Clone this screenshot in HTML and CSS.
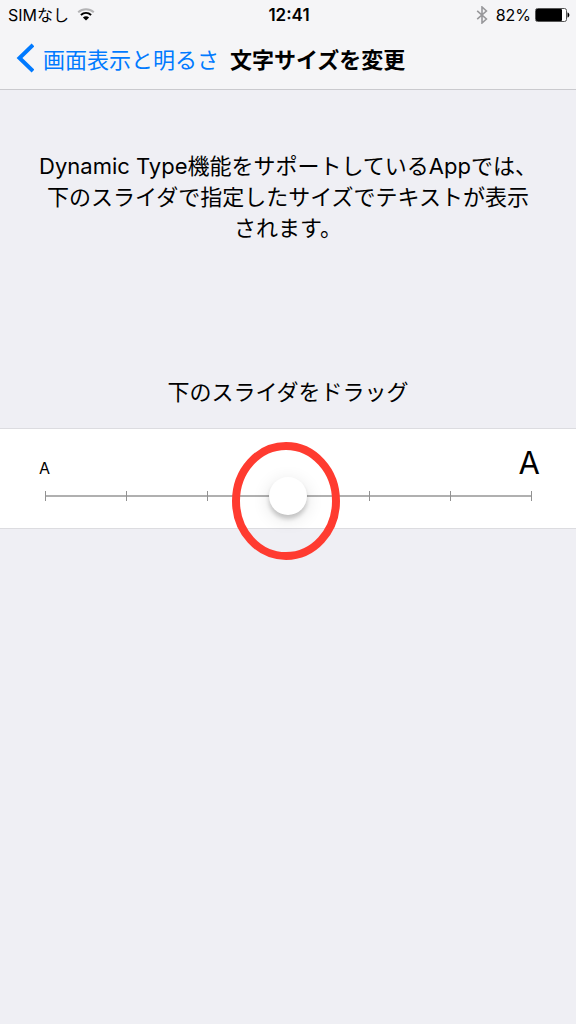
FILE: index.html
```html
<!DOCTYPE html>
<html lang="ja">
<head>
<meta charset="utf-8">
<meta name="viewport" content="width=device-width, initial-scale=1">
<title>文字サイズを変更</title>
<link rel="stylesheet" href="styles.css">
</head>
<body>
<header class="top">
  <div class="status">
    <div class="status-left">
      <span>SIMなし</span>
      <svg class="wifi" viewBox="0 0 18 13" width="18" height="13" aria-hidden="true">
        <path d="M1.2 4.2C5.7 .1 12.3 .1 16.8 4.2" fill="none" stroke="#b4b4b6" stroke-width="2"/>
        <path d="M3.9 7C6.9 4.4 11.1 4.4 14.1 7" fill="none" stroke="#000" stroke-width="2"/>
        <path d="M9 12.4L5.9 9.4C7.7 7.9 10.3 7.9 12.1 9.4Z" fill="#000"/>
      </svg>
    </div>
    <time class="clock">12:41</time>
    <div class="status-right">
      <svg class="bluetooth" viewBox="0 0 12 18" width="12" height="18" aria-hidden="true">
        <path d="M1.2 4.8L10.4 13L6 17V1L10.4 5L1.2 13.2" fill="none" stroke="#98989b" stroke-width="1.6"/>
      </svg>
      <span>82%</span>
      <svg class="battery" viewBox="0 0 35 14" width="35" height="14" aria-hidden="true">
        <rect x=".5" y=".5" width="31" height="13" rx="2" fill="#fff" stroke="#555"/>
        <rect x="1" y="1" width="26" height="12" rx="1" fill="#000"/>
        <path d="M32.500 4.500C35 5 35 9 32.500 9.500Z" fill="#000"/>
      </svg>
    </div>
  </div>
  <nav class="nav">
    <a class="back" href="#">
      <svg viewBox="0 0 18 30" width="18" height="30" aria-hidden="true">
        <path d="M17 2L3.500 15L17 28" fill="none" stroke="#007aff" stroke-width="4"/>
      </svg>
      <span>画面表示と明るさ</span>
    </a>
    <h1 class="title">文字サイズを変更</h1>
  </nav>
</header>
<main>
  <p class="description">Dynamic Type機能をサポートしているAppでは、<br>下のスライダで指定したサイズでテキストが表示<br>されます。</p>
  <label class="hint" for="size">下のスライダをドラッグ</label>
  <section class="panel">
    <div class="letters" aria-hidden="true"><span class="small">A</span><span class="large">A</span></div>
    <div class="slider">
      <div class="ticks"><i></i><i></i><i></i><i></i><i></i><i></i><i></i></div>
      <input class="range" id="size" type="range" min="0" max="6" value="3">
      <svg class="ring" viewBox="0 0 108 120" width="108" height="120" aria-hidden="true">
        <ellipse cx="54" cy="60" rx="50" ry="55" fill="none" stroke="#ff3b30" stroke-width="8"/>
      </svg>
    </div>
  </section>
</main>
</body>
</html>
```

FILE: styles.css
```css
* {
  box-sizing: border-box;
}

body {
  min-height: 100vh;
  margin: 0;
  background: #efeff4;
  color: #000;
  font-family: Inter, "Noto Sans CJK JP", sans-serif;
  font-size: 22px;
  font-weight: 400;
}

.top {
  background: #f5f5f7;
  border-bottom: 1px solid #cacace;
}

.status {
  display: grid;
  grid-template-columns: 1fr auto 1fr;
  align-items: center;
  height: 29px;
  padding: 0 6px 0 8px;
  font-size: 16px;
  line-height: 28px;
}

.status-left,
.status-right {
  display: flex;
  align-items: center;
  gap: 8px;
}

.status-right {
  justify-content: flex-end;
}

.battery {
  margin-left: -4px;
}

.clock {
  font-size: 17px;
  font-weight: 600;
}

.nav {
  display: flex;
  align-items: center;
  gap: 11px;
  height: 60px;
  padding: 0 16px 3px;
  white-space: nowrap;
}

.back {
  display: flex;
  align-items: center;
  gap: 9px;
  color: #007aff;
  text-decoration: none;
}

.title {
  margin: 0;
  font-size: 22px;
  font-weight: 600;
}

.description {
  margin: 0;
  padding: 61px 16px 0;
  line-height: 31px;
  text-align: center;
}

.hint {
  display: block;
  padding: 132px 16px 20px;
  line-height: 32px;
  text-align: center;
}

.panel {
  padding: 0 26px 13px;
  background: #fff;
  border-top: 1px solid #dcdce0;
  border-bottom: 1px solid #dcdce0;
}

.letters {
  display: flex;
  justify-content: space-between;
  align-items: baseline;
  height: 48px;
  padding: 18px 10px 0 13px;
  line-height: 32px;
}

.small {
  font-size: 16px;
}

.large {
  font-size: 31px;
}

.slider {
  position: relative;
  display: grid;
  align-items: center;
  height: 38px;
}

.ticks,
.range {
  grid-area: 1 / 1;
}

.ticks {
  display: flex;
  justify-content: space-between;
  height: 10px;
  margin: 0 18px 0 19px;
  background: linear-gradient(#b0b0b0, #b0b0b0) center / 100% 2px no-repeat;
}

.ticks i {
  width: 1px;
  background: #929292;
}

.range {
  width: 100%;
  height: 38px;
  margin: 0;
  appearance: none;
  background: transparent;
}

.range::-webkit-slider-thumb {
  width: 38px;
  height: 38px;
  appearance: none;
  background: #fff;
  border-radius: 50%;
  box-shadow: 0 4px 4px rgba(0, 0, 0, 0.18), 0 4px 18px rgba(0, 0, 0, 0.12);
}

.ring {
  position: absolute;
  top: -36px;
  left: calc(50% - 56px);
  pointer-events: none;
}
```
